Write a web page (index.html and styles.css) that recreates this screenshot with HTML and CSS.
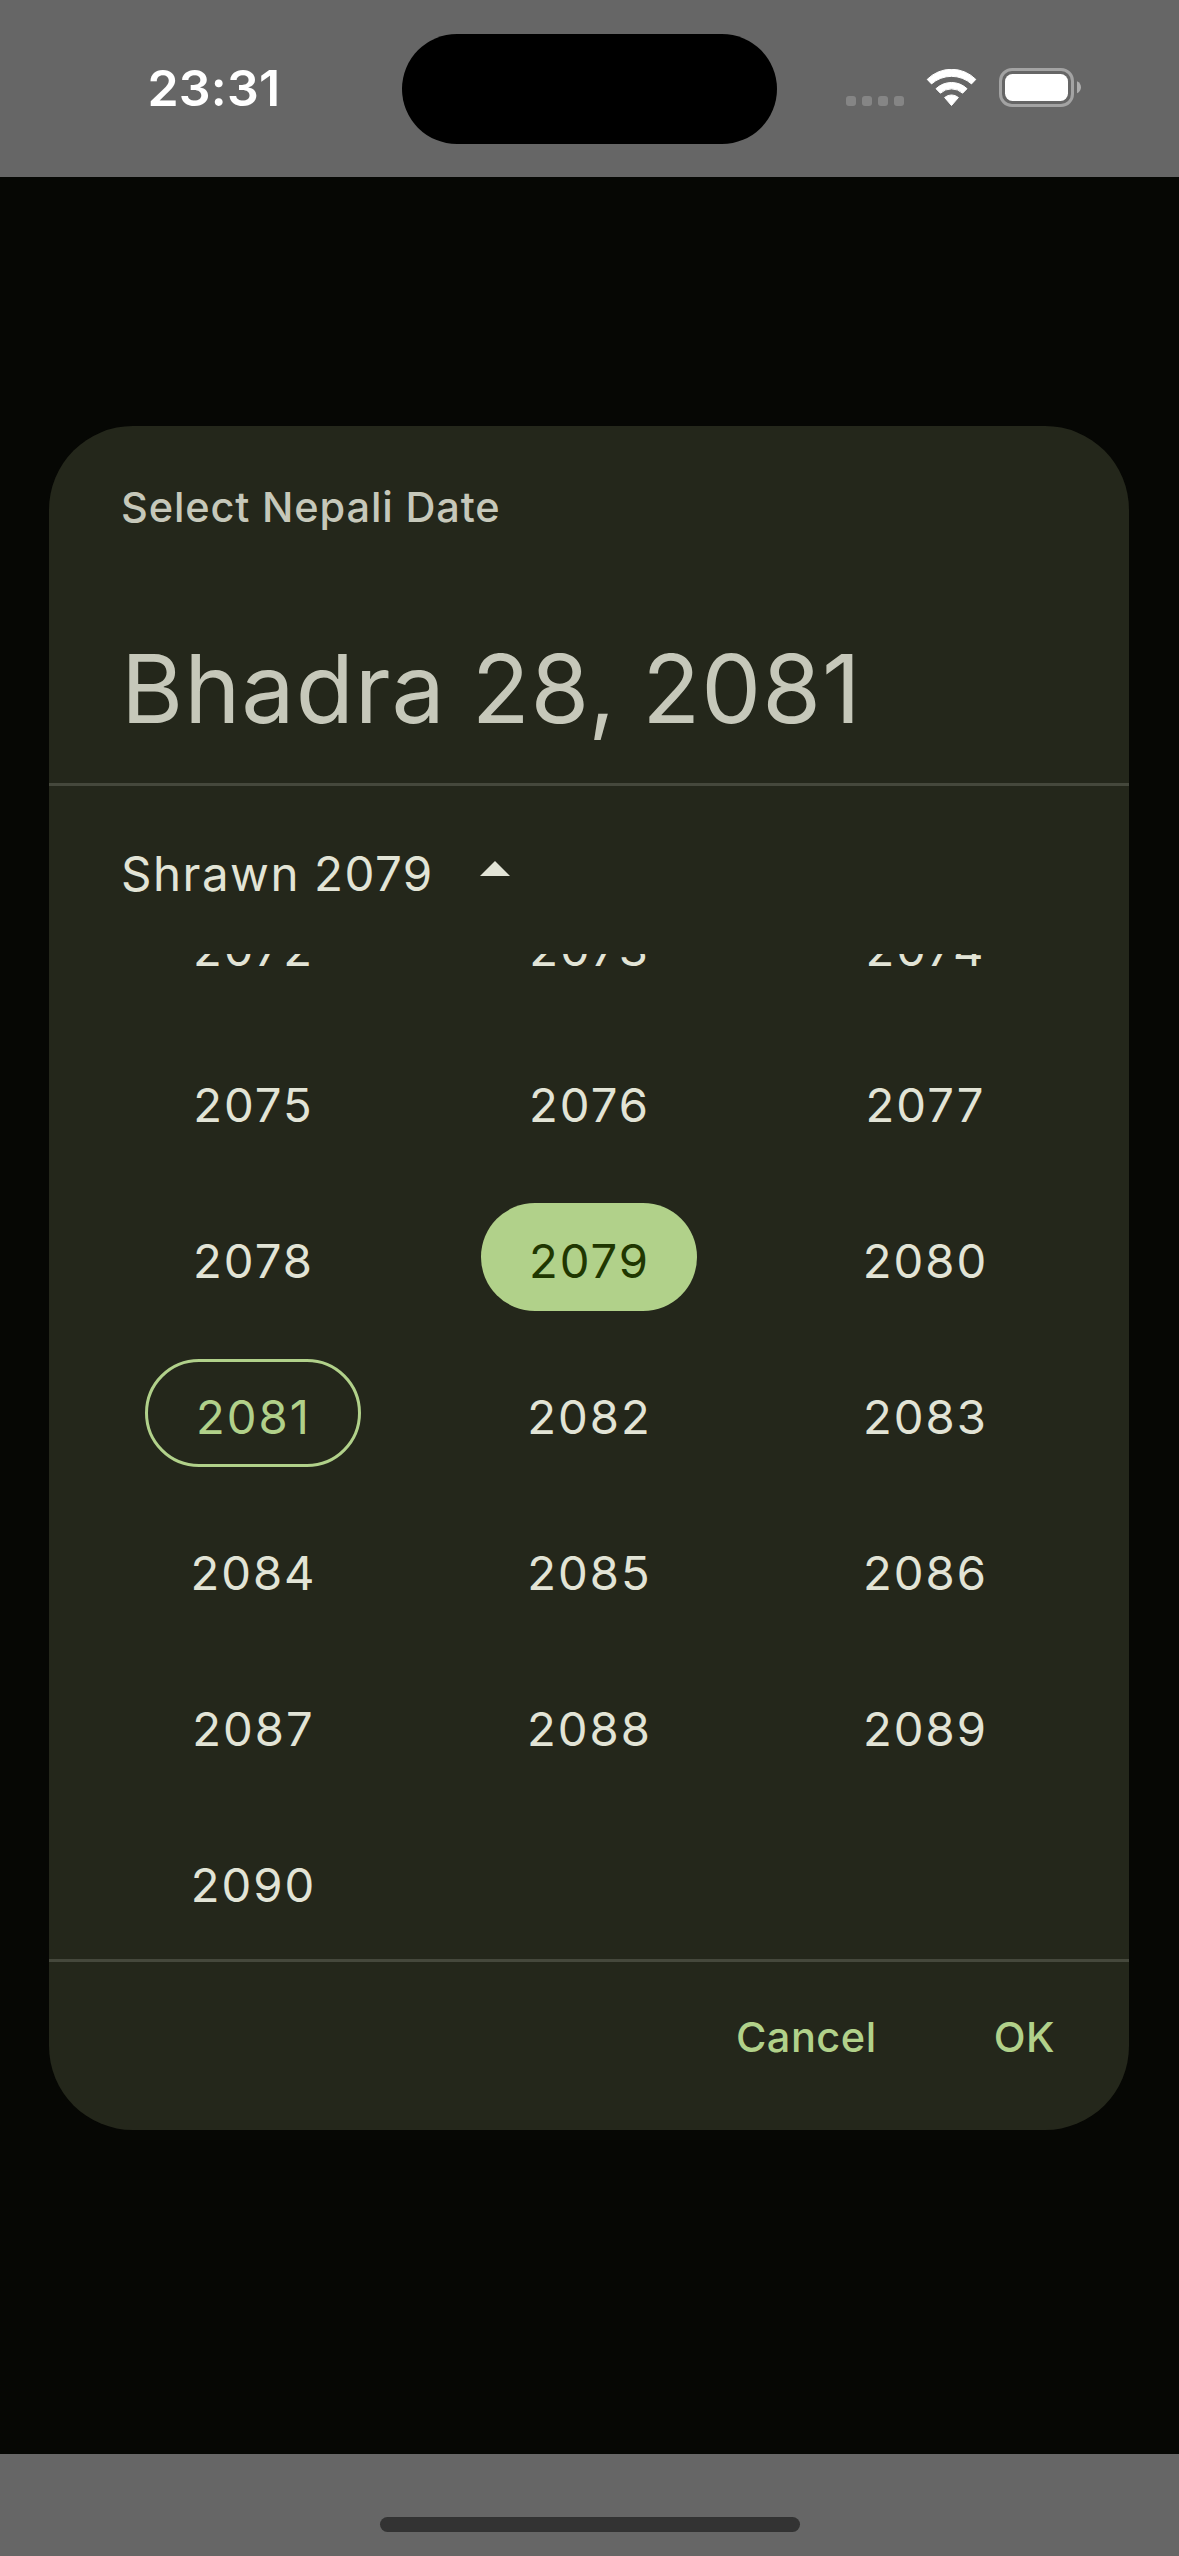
FILE: index.html
```
<!DOCTYPE html>
<html lang="en">
<head>
<meta charset="utf-8">
<title>Select Nepali Date</title>
<link rel="stylesheet" href="styles.css">
</head>
<body>
<div class="screen">
  <header class="status-bar">
    <div class="clock">23:31</div>
    <div class="island"></div>
    <div class="indicators">
      <div class="signal"><i></i><i></i><i></i><i></i></div>
      <svg class="wifi" width="51" height="38" viewBox="0 0 51 38" aria-hidden="true">
        <path d="M1.2 10.4A34.2 34.2 0 0 1 49.8 10.4L45.5 14.9A30.2 30.2 0 0 0 5.500 14.900Z"/>
        <path d="M10 19.700A22.400 22.400 0 0 1 41 19.700L36.600 24.200A16.400 16.400 0 0 0 14.400 24.200Z"/>
        <path d="M18.600 28.500A10.600 10.600 0 0 1 32.400 28.500L25.500 36.500Z"/>
      </svg>
      <svg class="battery" width="82" height="39" viewBox="0 0 82 39" aria-hidden="true">
        <rect class="battery-shell" x="1.500" y="1.500" width="72" height="36" rx="11.500"/>
        <rect class="battery-level" x="6" y="6" width="63" height="27" rx="7.500"/>
        <path class="battery-tip" d="M78 13.300C80.600 14.500 82 16.800 82 19.300S80.600 24.100 78 25.300Z"/>
      </svg>
    </div>
  </header>

  <main class="backdrop">
    <section class="dialog">
      <div class="dialog-header">
        <div class="label">Select Nepali Date</div>
        <div class="headline">Bhadra 28, 2081</div>
      </div>
      <div class="month-toggle">
        <span class="month-name">Shrawn 2079</span>
        <svg class="caret" width="30" height="15" viewBox="0 0 30 15" aria-hidden="true"><path d="M0 15L15 0L30 15Z"/></svg>
      </div>
      <div class="years-viewport">
        <div class="years">
          <div class="year">2072</div><div class="year">2073</div><div class="year">2074</div>
          <div class="year">2075</div><div class="year">2076</div><div class="year">2077</div>
          <div class="year">2078</div><div class="year selected">2079</div><div class="year">2080</div>
          <div class="year current">2081</div><div class="year">2082</div><div class="year">2083</div>
          <div class="year">2084</div><div class="year">2085</div><div class="year">2086</div>
          <div class="year">2087</div><div class="year">2088</div><div class="year">2089</div>
          <div class="year">2090</div>
        </div>
      </div>
      <div class="actions">
        <span class="action">Cancel</span>
        <span class="action">OK</span>
      </div>
    </section>
  </main>

  <footer class="home-area"><div class="home-indicator"></div></footer>
</div>
</body>
</html>
```
FILE: styles.css
```
* { box-sizing: border-box; }

body {
  margin: 0;
  font-family: Inter, "Liberation Sans", sans-serif;
  background: #060704;
}

.screen {
  display: flex;
  flex-direction: column;
  width: 1179px;
  height: 2556px;
  overflow: hidden;
  white-space: nowrap;
}

/* Status bar */
.status-bar {
  display: grid;
  grid-template-columns: 402px 375px 1fr;
  height: 177px;
  background: #666;
}
.clock {
  padding: 58px 0 0 147.500px;
  font-size: 50px;
  font-weight: 600;
  line-height: 60px;
  letter-spacing: 0.200px;
  color: #fff;
}
.island {
  height: 110.500px;
  margin-top: 33.500px;
  border-radius: 56px;
  background: #000;
}
.indicators {
  display: flex;
  align-items: flex-start;
  padding: 68px 0 0 69px;
}
.signal {
  display: flex;
  gap: 6px;
  margin-top: 28px;
}
.signal i {
  width: 10px;
  height: 10px;
  border-radius: 3px;
  background: #858585;
}
.wifi {
  margin: 1px 0 0 22px;
  fill: #fff;
  stroke: #fff;
  stroke-width: 1;
  stroke-linejoin: round;
}
.battery { margin-left: 22px; }
.battery-shell { fill: none; stroke: #a3a3a3; stroke-width: 3; }
.battery-level { fill: #fff; }
.battery-tip { fill: #adadad; }

/* Dialog */
.backdrop {
  flex: 1;
  padding: 249px 50px 0 49px;
  background: #060704;
}
.dialog {
  height: 1704px;
  border-radius: 84px;
  background: #24271b;
}
.dialog-header {
  height: 360px;
  padding: 51px 72px 0;
  border-bottom: 3px solid #45483c;
  color: #c6c8ba;
}
.label {
  font-size: 41.500px;
  font-weight: 550;
  line-height: 60px;
  letter-spacing: 0.850px;
}
.headline {
  margin-top: 92px;
  font-size: 95px;
  font-weight: 420;
  line-height: 120px;
  letter-spacing: 1px;
  word-spacing: -2px;
}
.month-toggle {
  display: flex;
  align-items: flex-start;
  height: 168px;
  padding: 58px 72px 0;
  color: #e2e4d6;
}
.month-name {
  width: 359px;
  font-size: 47.500px;
  font-weight: 420;
  line-height: 60px;
  letter-spacing: 1.500px;
  word-spacing: -1px;
}
.caret { margin-top: 17px; fill: currentColor; }

/* The year list is scrolled, so its first row is cut by the viewport */
.years-viewport {
  display: flex;
  flex-direction: column;
  justify-content: flex-end;
  height: 1008px;
  overflow: hidden;
  border-bottom: 3px solid #45483c;
}
.years {
  display: grid;
  grid-template-columns: repeat(3, 312px);
  grid-auto-rows: 156px;
  column-gap: 24px;
  align-items: center;
  justify-items: center;
  justify-content: center;
}
.year {
  width: 216px;
  height: 108px;
  padding: 8px 0 0 1px;
  border-radius: 54px;
  font-size: 47.200px;
  font-weight: 420;
  line-height: 100px;
  letter-spacing: 2px;
  text-align: center;
  color: #e2e4d6;
}
.year.selected {
  background: #b1d18a;
  color: #1f3701;
}
.year.current {
  padding-top: 5px;
  border: 3px solid #b1d18a;
  color: #b1d18a;
}
.actions {
  display: flex;
  justify-content: flex-end;
  padding: 45px 74px 0 0;
  gap: 117px;
}
.action {
  font-size: 41.500px;
  font-weight: 550;
  line-height: 60px;
  letter-spacing: 0.500px;
  color: #b1d18a;
}

/* Home indicator */
.home-area {
  display: flex;
  justify-content: center;
  height: 102px;
  padding-top: 63px;
  background: #666;
}
.home-indicator {
  width: 420px;
  height: 15px;
  border-radius: 8px;
  background: #333;
}
```
